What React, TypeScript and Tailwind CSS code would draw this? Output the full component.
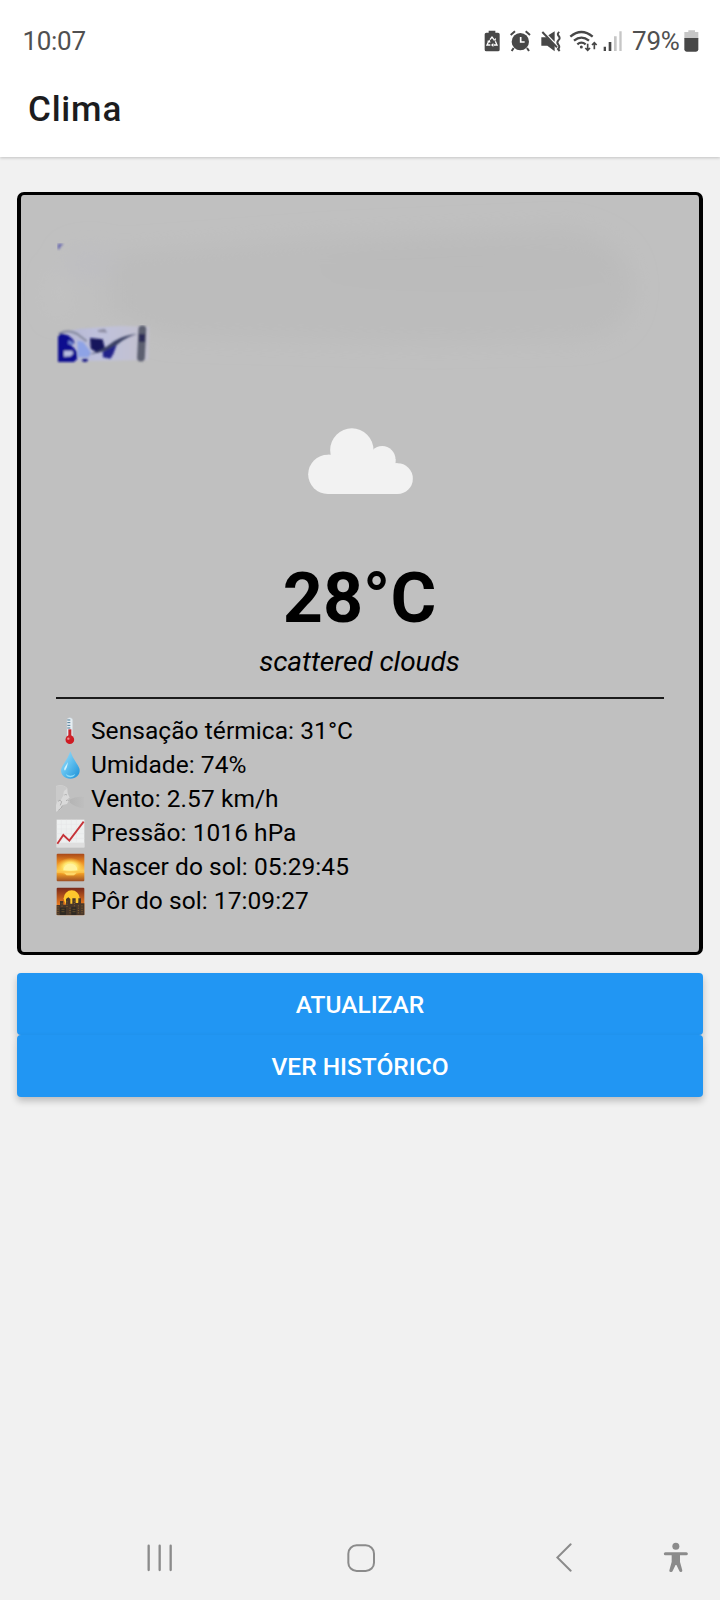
import type { ReactNode } from "react";

function StatusIcons() {
  return (
    <svg className="block h-[25px] w-[138px]" viewBox="42 54 414 75" fill="#474747" stroke="none">
      {/* battery protection */}
      <path d="M56 62h20v6h8q5 0 5 5v46q0 5-5 5H49q-5 0-5-5V73q0-5 5-5h7z" />
      <g fill="none" stroke="#fff" strokeWidth="4">
        <path d="M60 89l6-8 6 8" />
        <path d="M76 94l5 11h-10" />
        <path d="M56 94l-5 11h10" />
      </g>
      <path d="M70 99v12l-7-6zM51 93l9-3 1 9zM69 91l8 1 1-8z" fill="#fff" />
      {/* alarm */}
      <circle cx="151" cy="95" r="26" />
      <path d="M122 75l13-11M180 75l-13-11M131 114l-6 9M171 114l6 9" stroke="#474747" strokeWidth="6" />
      <path d="M152 81v15h12" fill="none" stroke="#fff" strokeWidth="5" />
      {/* vibrate / mute */}
      <path d="M214 82h16l24 24v18l-22-17h-18zM235 76l19-12v31z" />
      <path d="M217 66l44 46" stroke="#474747" strokeWidth="6" />
      <path d="M268 66q-8 5-2 12t-1 13q-6 6 0 13t-1 13l5 6" fill="none" stroke="#474747" strokeWidth="6" />
      {/* wifi */}
      <g fill="none" stroke="#474747" strokeWidth="7">
        <path d="M301 80q33-28 67 0" />
        <path d="M312 92q22-18 45 0" />
        <path d="M322 103q12-10 25 0" />
      </g>
      <circle cx="334" cy="111" r="4.5" />
      <path d="M353 101v20M346 114l7 7 7-7M373 118V98M366 105l7-7 7 7" fill="none" stroke="#474747" strokeWidth="5" />
      {/* signal */}
      <path d="M401 110h7v13h-7zM416 96h8v27h-8z" />
      <path d="M432 79h8v44h-8zM448 64h7v59h-7z" fill="#c6c6c6" />
    </svg>
  );
}

function BatteryIcon() {
  return (
    <svg className="block h-[22px] w-[15px]" viewBox="641 60 45 66">
      <path d="M654 61h20v5h10v20h-42V66h12z" fill="#c6c6c6" />
      <path d="M642 84h42v34q0 7-7 7h-28q-7 0-7-7z" fill="#474747" />
    </svg>
  );
}

function RedactedPlace() {
  return (
    <svg className="block h-[178px] w-[678px]" viewBox="63 45 2034 534">
      <defs>
        <filter id="haze" x="-20%" y="-40%" width="140%" height="180%">
          <feGaussianBlur stdDeviation="34" />
        </filter>
        <filter id="soft">
          <feGaussianBlur stdDeviation="2.6" />
        </filter>
        <linearGradient id="pale">
          <stop offset="0" stopColor="#b4b6d2" />
          <stop offset=".45" stopColor="#bfc1dc" />
          <stop offset="1" stopColor="#c3c1cd" />
        </linearGradient>
      </defs>
      <g filter="url(#haze)">
        <path d="M330 220L1000 170 1700 140Q1900 180 1900 320T1740 480L1300 490 500 470 330 400z" fill="#bcbcbc" />
        <ellipse cx="1400" cy="260" rx="440" ry="45" fill="#bababa" />
        <ellipse cx="270" cy="250" rx="80" ry="50" fill="#bebec1" />
        <ellipse cx="175" cy="340" rx="26" ry="70" fill="#c3c3c3" />
      </g>
      <path d="M173 191h18l-8 8-6 10-4-2z" fill="#6e6eb0" filter="url(#soft)" />
      <path d="M182 458L240 446 360 438 448 440 446 540 200 544z" fill="url(#pale)" filter="url(#soft)" />
      <g filter="url(#soft)">
        <path d="M176 462q26-16 56 0l28 22" fill="none" stroke="#83889c" strokeWidth="6" />
        <path d="M292 451l22-5 8 12-26-2z" fill="#8d8da2" />
        <path d="M232 482l18 4 22 30-6 16-32-1z" fill="#8ea3e6" />
        <path d="M270 474l38 4 7 28-23 12-20-12z" fill="#14165c" />
        <path d="M264 524Q308 512 342 484q32-20 70-22-36 10-58 30-26 22-62 26z" fill="#3a4164" />
        <path d="M308 516l42-22-10 28-9 14-22-4z" fill="#23248a" />
        <path d="M247 536h17l-3 9h-13z" fill="#10107e" />
        <path d="M427 448L423 533" fill="none" stroke="#5b5e70" strokeWidth="23" strokeLinecap="round" />
        <path d="M417 462h18v24h-18z" fill="#2a2a56" />
        <path d="M174 470l8-10 22 6 14 12 6 10-10 8 16 18 2 22-10 10h-48z" fill="#11118f" />
        <path d="M192 512h24l4 8-8 9-20 1z" fill="#b6bbdf" />
        <path d="M206 480l14 8-2 8-14-4z" fill="#6f83cf" />
      </g>
    </svg>
  );
}

function Cloud() {
  return (
    <svg className="mx-auto block h-[66px] w-[105px]" viewBox="206 85 314 198" fill="#f2f2f2">
      <circle cx="265" cy="224" r="59" />
      <circle cx="337" cy="151" r="65" />
      <circle cx="428" cy="179" r="40" />
      <circle cx="474" cy="237" r="46" />
      <path d="M265 165h7l130-10 66 24v12h6v92H265z" />
    </svg>
  );
}

function Thermometer() {
  return (
    <>
      <rect x="33" y="2" width="17" height="62" rx="8.5" fill="#e6eef2" stroke="#c9d3da" strokeWidth="1.5" />
      <path d="M34 9h9M34 17h9M34 25h9M34 33h9" stroke="#4d7894" strokeWidth="3" />
      <circle cx="41.500" cy="68" r="13" fill="#cf1b23" />
      <path d="M37 37h9v30h-9z" fill="#c9252b" />
      <circle cx="37" cy="65" r="3.500" fill="#ee8a8d" />
    </>
  );
}

function Drop() {
  return (
    <>
      <defs>
        <linearGradient id="water" x1="0" y1="0" x2="1" y2="1">
          <stop offset="0" stopColor="#a9e2fb" />
          <stop offset=".5" stopColor="#5bbdee" />
          <stop offset="1" stopColor="#1c8fd6" />
        </linearGradient>
      </defs>
      <path d="M43 1Q49 19 61 36Q71 50 71 58C71 73 60 83 43 83S15 73 15 58Q15 50 25 36Q37 19 43 1z" fill="url(#water)" />
      <path d="M25 51q6-10 11-17-2 15-8 24-5 2-3-7z" fill="#d0f1fc" />
      <path d="M29 69q14 11 29 0-5 10-15 10t-14-10z" fill="#8bdcfa" />
    </>
  );
}

function Wind() {
  return (
    <>
      <defs>
        <linearGradient id="breath">
          <stop offset="0" stopColor="#a8a8a8" />
          <stop offset="1" stopColor="#bcbcbc" />
        </linearGradient>
      </defs>
      <path d="M0 3Q22-4 34 10l1 15 6 13-5 3 2 6-5 10-13 3-5 13-15 7z" fill="#d9d9d9" />
      <path d="M0 4Q26-4 33 12 20 16 23 30L14 45 5 48 0 61z" fill="#cacaca" />
      <path d="M6 49q6-7 11 1l-4 11M25 30q4-3 8 0M30 47q5-4 8 0" fill="none" stroke="#999" strokeWidth="2" />
      <path d="M40 44Q61 32 84 36v33Q60 68 42 53z" fill="url(#breath)" opacity=".5" />
      <path d="M7 76q10-5 12-14" fill="none" stroke="#aaa" strokeWidth="3" />
    </>
  );
}

function Chart() {
  return (
    <>
      <path d="M2 2h83v83H2z" fill="#eef0f0" />
      <path d="M2 16h83M2 30h83M2 44h83M2 58h83M16 2v67M31 2v67M46 2v67M61 2v67" stroke="#e2e5e6" strokeWidth="1.500" />
      <path d="M2 71h83v14H2z" fill="#dedede" />
      <path d="M4 74L22 48 40 65 83 8" fill="none" stroke="#c63439" strokeWidth="5.500" />
    </>
  );
}

function Sunrise() {
  return (
    <>
      <defs>
        <linearGradient id="dawn" x1="0" y1="0" x2="0" y2="1">
          <stop offset="0" stopColor="#a74719" />
          <stop offset=".3" stopColor="#e98a21" />
          <stop offset=".65" stopColor="#ffd158" />
          <stop offset=".72" stopColor="#ef9d25" />
          <stop offset="1" stopColor="#9c4d24" />
        </linearGradient>
        <radialGradient id="glow">
          <stop offset="0" stopColor="#fffbd0" />
          <stop offset=".5" stopColor="#ffe66c" />
          <stop offset="1" stopColor="#ffcc3b" stopOpacity="0" />
        </radialGradient>
      </defs>
      <rect x="2" y="2" width="83" height="83" rx="3" fill="url(#dawn)" />
      <ellipse cx="43" cy="42" rx="41" ry="28" fill="url(#glow)" />
      <path d="M22 52a21 20 0 0 1 42 0z" fill="#fff3a0" />
      <path d="M3 55h81v4H3z" fill="#f9c04a" />
      <path d="M24 59h38l-8 8H32z" fill="#ffd768" />
    </>
  );
}

function Sunset() {
  return (
    <>
      <defs>
        <linearGradient id="dusk" x1="0" y1="0" x2="0" y2="1">
          <stop offset="0" stopColor="#782719" />
          <stop offset=".6" stopColor="#e87a1f" />
          <stop offset="1" stopColor="#ad6222" />
        </linearGradient>
      </defs>
      <rect x="2" y="2" width="83" height="83" rx="3" fill="url(#dusk)" />
      <circle cx="47" cy="34" r="24" fill="#ffc72d" />
      <path d="M2 54h10v-12h10v11h8V36l7-5 6 5v14h6V34h10v14h8V34h8v15h10v35H2z" fill="#49372a" />
      <path d="M6 58v24M18 49v29M33 43v18M55 41v20M67 55v25M78 55v27M42 62v20" stroke="#8c682e" strokeWidth="3" strokeDasharray="3 4" />
      <path d="M12 62h18v22H12zM46 61h15v23H46z" fill="#2e2923" />
      <path d="M17 67h9M17 74h9M50 67h8M50 74h8" stroke="#a17b35" strokeWidth="2" strokeDasharray="3 2" />
    </>
  );
}

function InfoRow({ icon, children }: { icon: ReactNode; children: ReactNode }) {
  return (
    <li className="flex h-[34px] items-center">
      <svg className="mr-1.5 block size-[29px] shrink-0" viewBox="0 0 87 87">
        {icon}
      </svg>
      <span className="whitespace-nowrap text-[24.5px] leading-[34px] tracking-[0.06px]">{children}</span>
    </li>
  );
}

function ActionButton({ children }: { children: ReactNode }) {
  return (
    <button className="block h-[62px] w-full rounded-[4px] bg-[#2196f3] pt-px text-center text-[24.5px] font-medium leading-[62px] text-white shadow-[0_4px_7px_rgba(0,0,0,0.22)]">
      {children}
    </button>
  );
}

export default function App() {
  return (
    <div className="flex h-[1600px] w-[720px] flex-col overflow-hidden bg-[#f1f1f1] font-['Roboto',sans-serif] text-black">
      <div className="bg-white shadow-[0_1px_3px_rgba(0,0,0,0.2)]">
        <div className="flex h-[80px] items-start pl-[22.5px] text-[#505050]">
          <span className="mt-[25px] text-[26px] leading-[32px] tracking-[-0.3px]">10:07</span>
          <div className="ml-auto mt-[28px]">
            <StatusIcons />
          </div>
          <span className="ml-[10px] mt-[25px] w-[52px] whitespace-nowrap text-[26px] leading-[32px] tracking-[-0.2px]">79%</span>
          <div className="mr-[21px] mt-[30px]">
            <BatteryIcon />
          </div>
        </div>
        <header className="h-[77px] pl-7 pt-[9px]">
          <h1 className="text-[35px] font-medium leading-[42px] tracking-[0.8px] text-[#1c1c1e]">Clima</h1>
        </header>
      </div>

      <main className="flex flex-col px-[17px] pt-[35px]">
        <section className="h-[763px] rounded-[7px] border-x-4 border-y-[3px] border-black bg-[#c0c0c0]">
          <RedactedPlace />
          <div className="pt-[55px]">
            <Cloud />
          </div>
          <p className="mt-[63px] pr-px text-center text-[70px] font-bold leading-[82px]">28°C</p>
          <p className="mt-[6px] pr-px text-center text-[28px] italic leading-[33px] tracking-[-0.05px]">scattered clouds</p>
          <hr className="mx-[35px] mt-[19px] h-[2px] border-0 bg-[#1b1b1b]" />
          <ul className="mt-[15px] px-[35px]">
            <InfoRow icon={<Thermometer />}>Sensação térmica: 31°C</InfoRow>
            <InfoRow icon={<Drop />}>Umidade: 74%</InfoRow>
            <InfoRow icon={<Wind />}>Vento: 2.57 km/h</InfoRow>
            <InfoRow icon={<Chart />}>Pressão: 1016 hPa</InfoRow>
            <InfoRow icon={<Sunrise />}>Nascer do sol: 05:29:45</InfoRow>
            <InfoRow icon={<Sunset />}>Pôr do sol: 17:09:27</InfoRow>
          </ul>
        </section>
        <div className="mt-[18px]">
          <ActionButton>ATUALIZAR</ActionButton>
          <ActionButton>VER HISTÓRICO</ActionButton>
        </div>
      </main>

      <nav className="mt-auto flex h-[86px] shrink-0 items-center pb-[1px] pl-[147px] pt-[2px] text-[#8b8b8b]">
        <svg className="block h-[28px] w-[26px]" viewBox="0 0 78 84" stroke="currentColor" strokeWidth="7" strokeLinecap="round">
          <path d="M5 5v73M38 5v73M71 5v73" />
        </svg>
        <svg className="ml-[174px] block size-[28px]" viewBox="0 0 84 84" fill="none" stroke="currentColor" strokeWidth="6">
          <rect x="4" y="4" width="77" height="77" rx="25" />
        </svg>
        <svg className="ml-[181px] block h-[29px] w-[16px]" viewBox="0 0 48 87" fill="none" stroke="currentColor" strokeWidth="6" strokeLinecap="round">
          <path d="M44 4L4 43.500l40 39.500" />
        </svg>
        <svg className="ml-[91px] block h-[31px] w-[26px]" viewBox="429 68 78 93" fill="currentColor" stroke="currentColor" strokeLinejoin="round" strokeLinecap="round">
          <circle cx="467.500" cy="80.500" r="10.500" stroke="none" />
          <path d="M436 103h63" strokeWidth="9" />
          <path d="M459 106h17v22l7 26h-1l-14-29-14 29h-2l7-26z" strokeWidth="8" />
        </svg>
      </nav>
    </div>
  );
}
